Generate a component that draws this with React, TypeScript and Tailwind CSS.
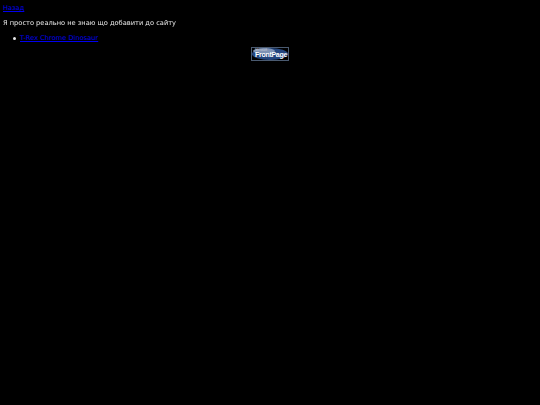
export default function App() {
  return (
    <div className="min-h-[405px] bg-black px-[3px] pt-[4px] font-['DejaVu_Sans',sans-serif] text-[6.67px] leading-[8px] text-[#e8e8e8]">
      <p>
        <a href="#" className="text-[#0000ee] underline">Назад</a>
      </p>
      <p className="mt-[7px] will-change-transform">Я просто реально не знаю що добавити до сайту</p>
      <ul className="mt-[7px] pl-[10px]">
        <li className="flex items-center gap-[4px]">
          <span className="h-[3px] w-[3px] rounded-full bg-[#e8e8e8]" />
          <a href="#" className="text-[#0000ee] underline">T-Rex Chrome Dinosaur</a>
        </li>
      </ul>
      <div className="mt-[5px] flex justify-center">
        <FrontPageBadge />
      </div>
    </div>
  );
}

function FrontPageBadge() {
  return (
    <div className="relative h-[14px] w-[38px] border border-[#4a5a70] bg-black">
      <svg viewBox="0 0 36 12" className="absolute inset-0 h-full w-full">
        <ellipse cx="18" cy="6" rx="18" ry="6" fill="#24467f" />
        <ellipse cx="12" cy="3" rx="11" ry="3" fill="#7f93b5" />
      </svg>
      <span className="absolute left-[3px] top-0 font-['Liberation_Sans',sans-serif] text-[3px] leading-[4px] text-[#c8cdd6]">Microsoft</span>
      <span className="absolute right-[1px] top-[3px] font-['Liberation_Sans',sans-serif] text-[7px] font-bold leading-[8px] tracking-[-0.3px] text-white">FrontPage</span>
    </div>
  );
}
